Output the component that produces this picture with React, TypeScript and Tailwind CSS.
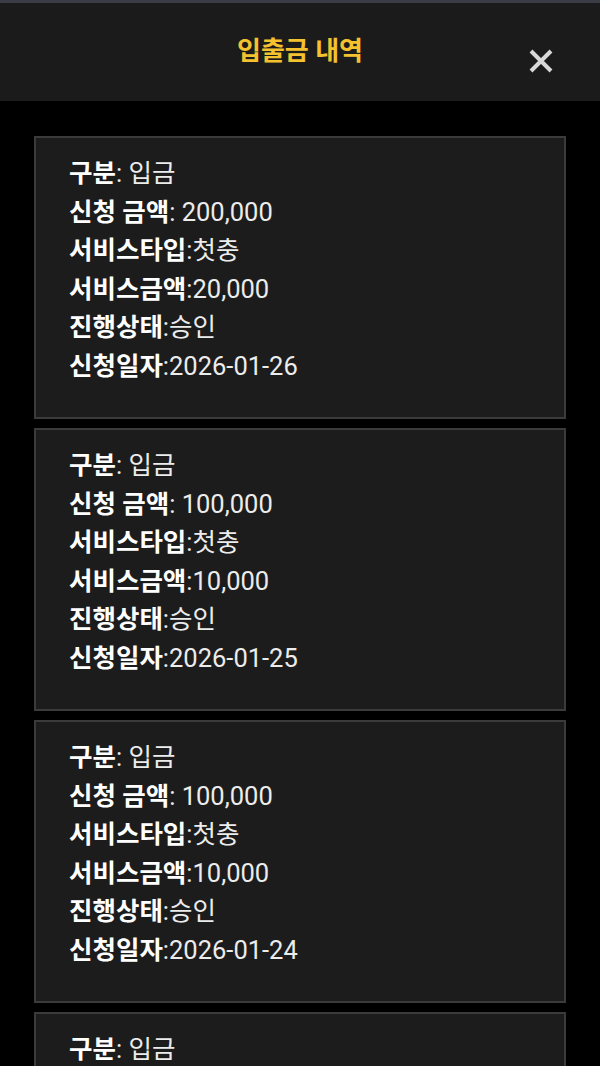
import React from "react";

type Item = {
  type: string;
  amount: string;
  serviceType: string;
  serviceAmount: string;
  status: string;
  date: string;
};

const items: Item[] = [
  { type: "입금", amount: "200,000", serviceType: "첫충", serviceAmount: "20,000", status: "승인", date: "2026-01-26" },
  { type: "입금", amount: "100,000", serviceType: "첫충", serviceAmount: "10,000", status: "승인", date: "2026-01-25" },
  { type: "입금", amount: "100,000", serviceType: "첫충", serviceAmount: "10,000", status: "승인", date: "2026-01-24" },
  { type: "입금", amount: "100,000", serviceType: "첫충", serviceAmount: "10,000", status: "승인", date: "2026-01-23" },
];

function Row({ label, value, space }: { label: string; value: string; space?: boolean }) {
  return (
    <div className="whitespace-nowrap">
      <span className="font-bold text-white">{label}</span>
      <span className="text-[#ececec]">:{space ? " " : ""}{value}</span>
    </div>
  );
}

export default function App() {
  return (
    <div
      className="h-[1066px] overflow-hidden bg-black"
      style={{ fontFamily: "Roboto, 'Noto Sans CJK KR', sans-serif" }}
    >
      <div className="h-[3px] bg-[#3a3c46]" />
      <header className="relative flex h-[98px] items-center justify-center bg-[#1b1b1b]">
        <h1 className="pb-[1px] text-[26px] font-bold text-[#f4c12f]">입출금 내역</h1>
        <button className="absolute right-[46px] top-[45px] flex h-[26px] w-[26px] items-center justify-center">
          <svg width="26" height="26" viewBox="0 0 26 26">
            <path d="M3 3 L23 23 M23 3 L3 23" stroke="#d8d8d8" strokeWidth="4" strokeLinecap="butt" />
          </svg>
        </button>
      </header>
      <main className="flex flex-col gap-[9px] px-[34px] pt-[35px]">
        {items.map((it, i) => (
          <div
            key={i}
            className="border-2 border-[#3b3b3b] bg-[#1c1c1c] pb-[32px] pl-[33px] pt-[16px] text-[25.5px] leading-[38.5px]"
          >
            <Row label="구분" value={it.type} space />
            <Row label="신청 금액" value={it.amount} space />
            <Row label="서비스타입" value={it.serviceType} />
            <Row label="서비스금액" value={it.serviceAmount} />
            <Row label="진행상태" value={it.status} />
            <Row label="신청일자" value={it.date} />
          </div>
        ))}
      </main>
    </div>
  );
}
